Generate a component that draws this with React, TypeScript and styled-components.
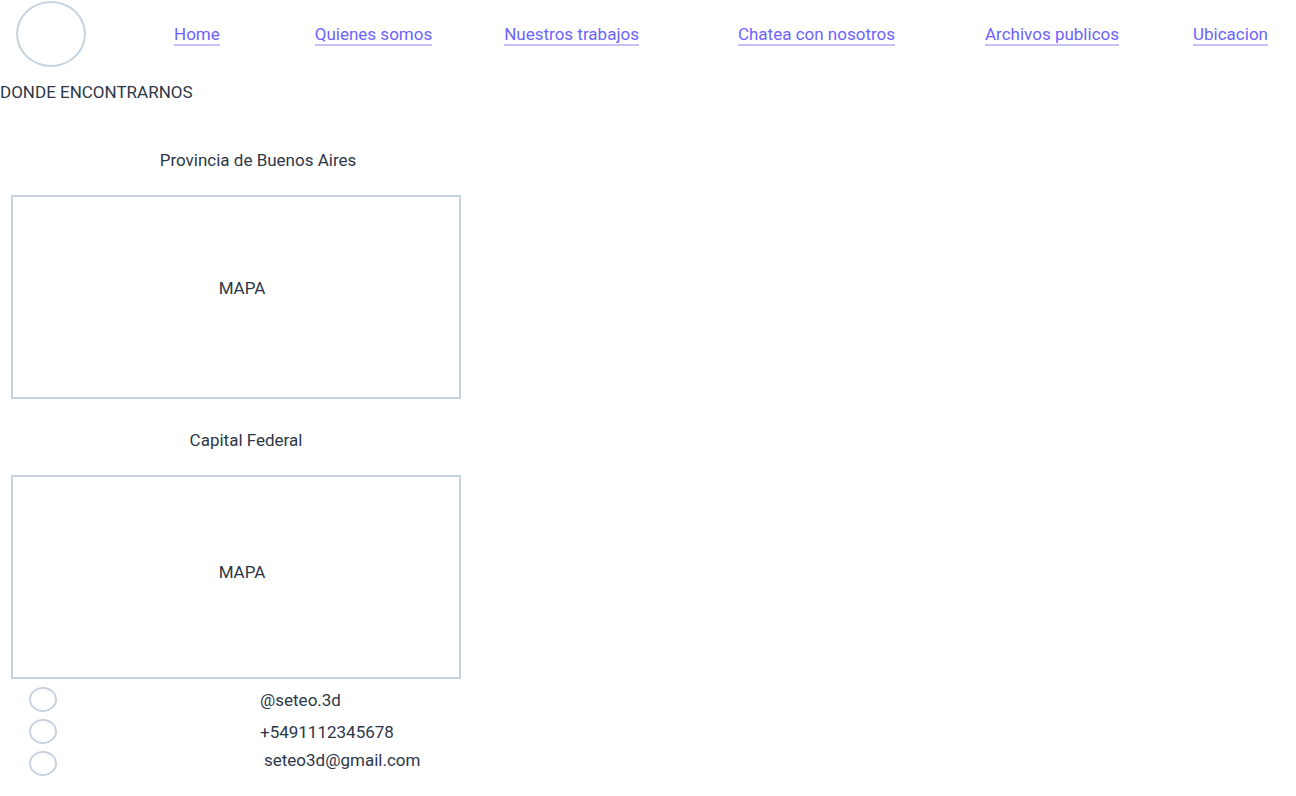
import React from "react";
import styled, { createGlobalStyle } from "styled-components";

const Global = createGlobalStyle`
  html, body { margin: 0; padding: 0; background: #ffffff; }
  body { font-family: Roboto, "Noto Sans", sans-serif; color: #2d3748; }
`;

const Header = styled.header`
  display: flex;
  align-items: center;
  height: 72px;
  padding-left: 16px;
`;

const Logo = styled.div`
  width: 66px;
  height: 62px;
  border: 2px solid #c6d3de;
  border-radius: 50%;
  margin-top: -4px;
`;

const Nav = styled.nav`
  display: flex;
  align-items: center;
  height: 100%;
`;

const NavLink = styled.a<{ $ml: number }>`
  margin-left: ${(p) => p.$ml}px;
  font-size: 17px;
  line-height: 20px;
  color: #6c63ff;
  text-decoration: none;
  border-bottom: 2px solid #c4c1fb;
  margin-top: -2px;
  white-space: nowrap;
`;

const Title = styled.h1`
  margin: 10px 0 0 0;
  font-size: 17px;
  font-weight: 400;
  line-height: 20px;
`;

const Section = styled.section`
  display: flex;
  flex-direction: column;
  width: 472px;
`;

const Region = styled.h2<{ $shift: number; $mt: number }>`
  margin: ${(p) => p.$mt}px 0 0 0;
  font-size: 17px;
  font-weight: 400;
  line-height: 20px;
  text-align: center;
  padding-left: ${(p) => p.$shift}px;
`;

const MapBox = styled.div<{ $lift: number }>`
  margin: 25px 0 0 11px;
  width: 450px;
  height: 204px;
  box-sizing: border-box;
  border: 2px solid #c6d3de;
  display: flex;
  align-items: center;
  justify-content: center;
  padding-left: 12px;
  padding-bottom: ${(p) => p.$lift * 2}px;
  font-size: 17px;
`;

const Contacts = styled.ul`
  list-style: none;
  margin: 8px 0 0 0;
  padding: 0 0 0 29px;
  display: flex;
  flex-direction: column;
  gap: 7px;
`;

const ContactRow = styled.li`
  display: flex;
  align-items: center;
  height: 25px;
`;

const Dot = styled.span`
  width: 24px;
  height: 21px;
  border: 2px solid #c6d3de;
  border-radius: 50%;
  flex: none;
`;

const ContactText = styled.span<{ $dx: number; $dy: number }>`
  margin-left: ${(p) => 203 + p.$dx}px;
  margin-top: ${(p) => p.$dy}px;
  font-size: 17px;
`;

const links = [
  { t: "Home", ml: 88 },
  { t: "Quienes somos", ml: 95 },
  { t: "Nuestros trabajos", ml: 72 },
  { t: "Chatea con nosotros", ml: 99 },
  { t: "Archivos publicos", ml: 90 },
  { t: "Ubicacion", ml: 74 },
];

const contacts = [
  { t: "@seteo.3d", dx: 0, dy: 0 },
  { t: "+5491112345678", dx: 0, dy: 0 },
  { t: "seteo3d@gmail.com", dx: 4, dy: -8 },
];

export default function App() {
  return (
    <>
      <Global />
      <Header>
        <Logo />
        <Nav>
          {links.map((l) => (
            <NavLink key={l.t} href="#" $ml={l.ml}>
              {l.t}
            </NavLink>
          ))}
        </Nav>
      </Header>
      <Title>DONDE ENCONTRARNOS</Title>
      <Section>
        <Region $shift={44} $mt={48}>
          Provincia de Buenos Aires
        </Region>
        <MapBox $lift={9}>MAPA</MapBox>
        <Region $shift={20} $mt={31}>
          Capital Federal
        </Region>
        <MapBox $lift={5}>MAPA</MapBox>
      </Section>
      <Contacts>
        {contacts.map((c) => (
          <ContactRow key={c.t}>
            <Dot />
            <ContactText $dx={c.dx} $dy={c.dy}>
              {c.t}
            </ContactText>
          </ContactRow>
        ))}
      </Contacts>
    </>
  );
}
